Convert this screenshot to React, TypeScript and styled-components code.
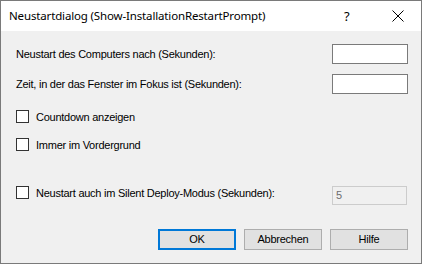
import styled, { createGlobalStyle } from "styled-components";

const GlobalStyle = createGlobalStyle`
    html, body {
        margin: 0;
        padding: 0;
        background: #ffffff;
    }
    * {
        box-sizing: border-box;
    }
`;

const App = () => {
    return (
        <>
            <GlobalStyle />
            <Window>
                <TitleBar>
                    <Title>Neustartdialog (Show-InstallationRestartPrompt)</Title>
                    <HelpGlyph>?</HelpGlyph>
                    <CloseButton>
                        <svg width="12" height="12" viewBox="0 0 12 12">
                            <path d="M0.5 0.5 L11.5 11.5 M11.5 0.5 L0.5 11.5" stroke="#000" strokeWidth="1" fill="none" />
                        </svg>
                    </CloseButton>
                </TitleBar>
                <Client>
                    <FieldRow $top={13}>
                        <Label>Neustart des Computers nach (Sekunden):</Label>
                        <TextBox />
                    </FieldRow>
                    <FieldRow $top={10}>
                        <Label>Zeit, in der das Fenster im Fokus ist (Sekunden):</Label>
                        <TextBox />
                    </FieldRow>
                    <CheckRow $top={16}>
                        <Box />
                        <Label>Countdown anzeigen</Label>
                    </CheckRow>
                    <CheckRow $top={15}>
                        <Box />
                        <Label>Immer im Vordergrund</Label>
                    </CheckRow>
                    <SilentRow>
                        <CheckRow $top={0}>
                            <Box />
                            <Label>Neustart auch im Silent Deploy-Modus (Sekunden):</Label>
                        </CheckRow>
                        <DisabledBox>5</DisabledBox>
                    </SilentRow>
                    <ButtonBar>
                        <Button $primary>OK</Button>
                        <Button>Abbrechen</Button>
                        <Button>Hilfe</Button>
                    </ButtonBar>
                </Client>
            </Window>
        </>
    );
};
export default App;

const Window = styled.div`
    width: 422px;
    height: 264px;
    border: 1px solid #7a7a7a;
    display: flex;
    flex-direction: column;
    font-family: "Liberation Sans", Arial, sans-serif;
    font-size: 11px;
    letter-spacing: -0.25px;
    color: #000;
`;

const TitleBar = styled.div`
    height: 30px;
    background: #ffffff;
    display: flex;
    align-items: center;
    padding-left: 8px;
`;

const Title = styled.div`
    font-family: "Noto Sans", "Open Sans", sans-serif;
    font-size: 11.5px;
    letter-spacing: -0.15px;
    flex: 1;
    padding-bottom: 1px;
`;

const HelpGlyph = styled.div`
    font-family: "Noto Sans", sans-serif;
    font-size: 13px;
    letter-spacing: 0;
    width: 14px;
    margin-right: 34px;
    padding-bottom: 1px;
`;

const CloseButton = styled.div`
    width: 12px;
    height: 12px;
    margin-right: 17px;
    display: flex;
    svg {
        display: block;
    }
`;

const Client = styled.div`
    flex: 1;
    background: #f0f0f0;
    display: flex;
    flex-direction: column;
    padding: 0 13px 0 15px;
`;

const FieldRow = styled.div<{ $top: number }>`
    margin-top: ${(p) => p.$top}px;
    height: 20px;
    display: flex;
    align-items: center;
    justify-content: space-between;
`;

const Label = styled.span`
    line-height: 13px;
    white-space: nowrap;
    padding-top: 1px;
`;

const TextBox = styled.div`
    width: 76px;
    height: 20px;
    background: #ffffff;
    border: 1px solid #7a7a7a;
`;

const CheckRow = styled.div<{ $top: number }>`
    margin-top: ${(p) => p.$top}px;
    height: 13px;
    display: flex;
    align-items: center;
    gap: 7px;
`;

const Box = styled.div`
    width: 13px;
    height: 13px;
    border: 1px solid #333333;
    background: #ffffff;
    flex-shrink: 0;
`;

const SilentRow = styled.div`
    margin-top: 35px;
    height: 19px;
    display: flex;
    align-items: flex-start;
    justify-content: space-between;
    padding-right: 1px;
`;

const DisabledBox = styled.div`
    width: 75px;
    height: 19px;
    border: 1px solid #cccccc;
    background: #f0f0f0;
    color: #6d6d6d;
    padding: 2px 0 0 3px;
    line-height: 13px;
`;

const ButtonBar = styled.div`
    margin-top: 24px;
    display: flex;
    justify-content: flex-end;
    gap: 8px;
`;

const Button = styled.div<{ $primary?: boolean }>`
    width: 78px;
    height: 21px;
    background: #e1e1e1;
    border: ${(p) => (p.$primary ? "2px solid #0078d7" : "1px solid #adadad")};
    display: flex;
    align-items: center;
    justify-content: center;
    line-height: 13px;
`;
